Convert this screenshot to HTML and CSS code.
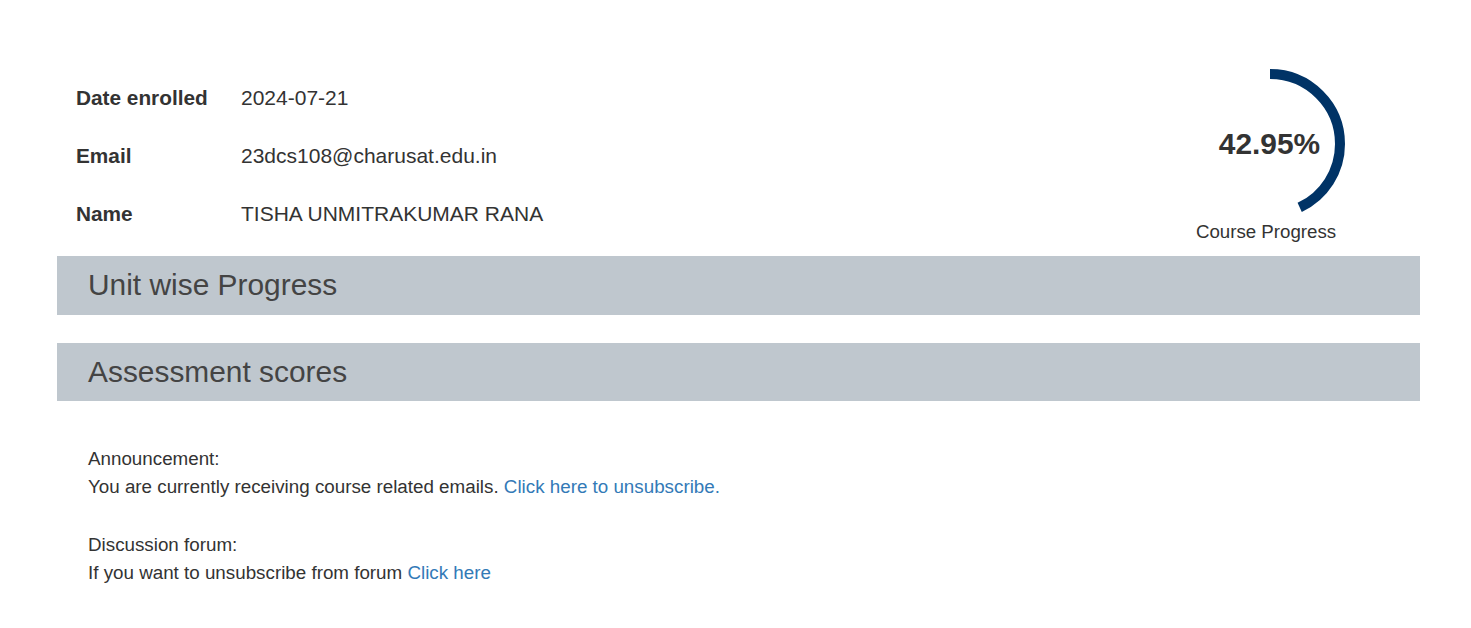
FILE: index.html
```html
<!DOCTYPE html>
<html>
<head>
<meta charset="utf-8">
<link rel="stylesheet" href="styles.css">
</head>
<body>
<div class="page">
  <div class="top">
    <div class="info">
      <div class="row"><span class="label">Date enrolled</span><span class="value">2024-07-21</span></div>
      <div class="row"><span class="label">Email</span><span class="value">23dcs108@charusat.edu.in</span></div>
      <div class="row"><span class="label">Name</span><span class="value">TISHA UNMITRAKUMAR RANA</span></div>
    </div>
    <div class="progress">
      <div class="ring">
        <svg width="160" height="160" viewBox="0 0 160 160">
          <circle cx="80" cy="80" r="70" fill="none" stroke="#003366" stroke-width="10"
            stroke-dasharray="188.9 500" transform="rotate(-90 80 80)"/>
        </svg>
        <span class="pct">42.95%</span>
      </div>
      <div class="caption">Course Progress</div>
    </div>
  </div>
  <div class="bar">Unit wise Progress</div>
  <div class="bar">Assessment scores</div>
  <div class="notes">
    <p>Announcement:<br>You are currently receiving course related emails. <a href="#">Click here to unsubscribe.</a></p>
    <p>Discussion forum:<br>If you want to unsubscribe from forum <a href="#">Click here</a></p>
  </div>
</div>
</body>
</html>
```
FILE: styles.css
```css
html, body {
  margin: 0;
  padding: 0;
  background: #fff;
}
body {
  font-family: "Liberation Sans", Arial, sans-serif;
  color: #333;
}
.page {
  padding: 64px 51px 0 57px;
}
.top {
  display: flex;
  justify-content: space-between;
  align-items: flex-start;
}
.info {
  display: flex;
  flex-direction: column;
  gap: 34px;
  padding: 22px 0 0 19px;
}
.row {
  display: flex;
  font-size: 21px;
  line-height: 24px;
}
.label {
  font-weight: bold;
  width: 165px;
  font-size: 20.8px;
}
.progress {
  display: flex;
  flex-direction: column;
  align-items: center;
  margin-right: 70px;
}
.ring {
  position: relative;
  width: 160px;
  height: 160px;
}
.ring svg {
  display: block;
}
.pct {
  position: absolute;
  left: 0;
  right: 0;
  top: 64px;
  text-align: center;
  font-size: 29.9px;
  font-weight: bold;
  line-height: 32px;
  margin-left: -1px;
}
.caption {
  font-size: 18.7px;
  line-height: 22px;
  margin-top: -3px;
  margin-left: -8px;
}
.bar {
  background: #bfc7ce;
  color: #444;
  font-size: 29.9px;
  height: 58.5px;
  line-height: 58.5px;
  padding-left: 31px;
  margin-top: 13px;
}
.bar + .bar {
  margin-top: 28px;
}
.notes {
  padding: 44px 0 0 31px;
  font-size: 18.8px;
  line-height: 28px;
}
.notes p {
  margin: 0 0 30px;
}
a {
  color: #337ab7;
  text-decoration: none;
}
```
